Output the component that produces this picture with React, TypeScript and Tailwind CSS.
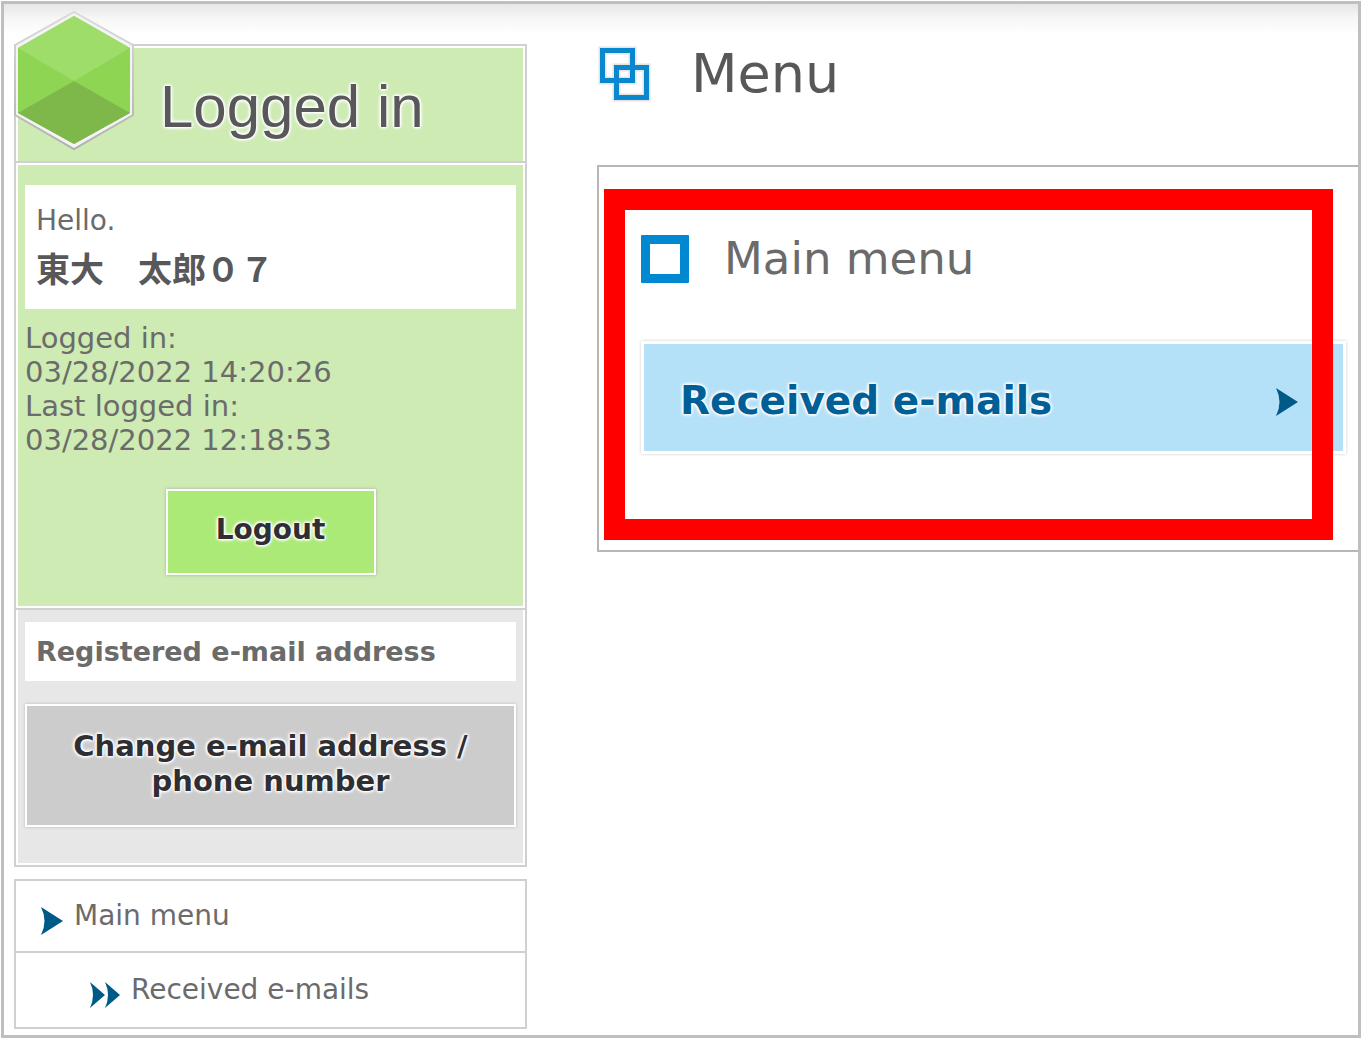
import type { ReactNode } from "react";

const glow = "[text-shadow:0_0_2px_#fff,0_0_2px_#fff,0_0_3px_#fff,0_0_3px_#fff,0_0_4px_#fff,0_0_4px_#fff]";

function Hexagon() {
  return (
    <svg viewBox="0 0 120 140" className="h-[140px] w-[120px]" aria-hidden="true">
      <defs>
        <linearGradient id="hexEdge" x1="0" y1="0" x2="0" y2="1">
          <stop offset="0" stopColor="#dadada" />
          <stop offset="1" stopColor="#b0b0b0" />
        </linearGradient>
      </defs>
      <path d="M60 1 L119 34 V104 L60 138 L1 104 V34 Z" fill="#f4f4f4" stroke="url(#hexEdge)" strokeWidth="2" />
      <path d="M60 5 L116 37 V102 L60 133 L4 102 V37 Z" fill="#8dd552" />
      <path d="M60 5 L116 37 L60 70 L4 37 Z" fill="#9fdd6b" />
      <path d="M60 70 L116 102 L60 133 L4 102 Z" fill="#7eb74a" />
    </svg>
  );
}

function SquaresIcon() {
  return (
    <svg viewBox="0 0 56 58" className="h-[58px] w-[56px]" aria-hidden="true">
      <g fill="none" strokeLinejoin="miter">
        <g stroke="#e6e2e0" strokeWidth="8">
          <rect x="5.5" y="5.5" width="30" height="30" />
          <rect x="19.5" y="22.5" width="30" height="30" />
        </g>
        <g stroke="#0a88cf" strokeWidth="5">
          <rect x="5.5" y="5.5" width="30" height="30" />
          <rect x="19.5" y="22.5" width="30" height="30" />
        </g>
      </g>
    </svg>
  );
}

function Arrow() {
  return (
    <svg viewBox="0 0 24 28" className="h-7 w-6 shrink-0" aria-hidden="true">
      <path d="M1 0 L23 14 L1 28 Q8 14 1 0 Z" fill="#005a87" />
    </svg>
  );
}

function DoubleArrow() {
  return (
    <svg viewBox="0 0 32 28" className="h-7 w-8 shrink-0" aria-hidden="true">
      <path d="M1 1 L16 14 L1 27 Q7 14 1 1 Z M16 1 L31 14 L16 27 Q22 14 16 1 Z" fill="#005a87" />
    </svg>
  );
}

function WhiteBox({ children }: { children: ReactNode }) {
  return <div className="bg-white px-[11px]">{children}</div>;
}

export default function App() {
  return (
    <div className="min-h-screen bg-white p-px font-['DejaVu_Sans','Noto_Sans_CJK_JP',sans-serif] text-[28px] text-[#6b6b6b]">
      <div className="flex min-h-[calc(100vh-2px)] items-start border-[3px] border-[#bfbfbf] bg-[linear-gradient(#e6e6e6,#f6f6f6_14px,#fff_30px)] pl-2.5">
        <aside className="w-[513px] shrink-0 pt-10">
          <div className="border-2 border-[#d0d0d2]">
            <div className="border-b-2 border-[#d0d0d2]">
              <header className="relative flex h-[115px] items-center border-x-2 border-t-2 border-white bg-[#cdebb2] pl-[142px]">
                <div className="absolute -left-1 -top-[37px]">
                  <Hexagon />
                </div>
                <h2 className={`pt-1 font-['Liberation_Sans',sans-serif] text-[60px] leading-[64px] text-[#58585a] ${glow}`}>
                  Logged in
                </h2>
              </header>
            </div>
            <div className="border-b-2 border-[#d0d0d2]">
              <section className="border-2 border-white bg-[#cdebb2] px-[7px] pb-[31px] pt-5">
                <WhiteBox>
                  <p className="pt-[18px] leading-9">Hello.</p>
                  <p className="pb-[17px] pt-[9px] text-[34px] font-bold leading-[44px] text-[#58585a]">東大　太郎０７</p>
                </WhiteBox>
                <div className="pt-3 text-[29px] leading-[34px]">
                  <p>Logged in:</p>
                  <p>03/28/2022 14:20:26</p>
                  <p>Last logged in:</p>
                  <p>03/28/2022 12:18:53</p>
                </div>
                <div className="flex justify-center pt-8">
                  <button
                    type="button"
                    className={`h-[86px] w-[210px] border-2 border-white bg-[#abea76] pb-1 font-bold text-[#2f2f33] shadow-[0_0_3px_#aaa] ${glow}`}
                  >
                    Logout
                  </button>
                </div>
              </section>
            </div>
            <section className="border-2 border-t-0 border-white bg-[#e7e7e7] px-[7px] pb-9 pt-3">
              <WhiteBox>
                <h3 className="text-[27px] font-bold leading-[59px]">Registered e-mail address</h3>
              </WhiteBox>
              <button
                type="button"
                className={`mt-[23px] h-[123px] w-full border-2 border-white bg-[#ccc] px-8 pb-1 text-[29px] font-bold leading-[35px] text-[#2f2f33] shadow-[0_0_3px_#bbb] ${glow}`}
              >
                Change e-mail address / phone number
              </button>
            </section>
          </div>
          <nav className="mt-3 divide-y-2 divide-[#d0d0d2] border-2 border-[#d0d0d2] bg-white">
            <a href="#main-menu" className="flex h-[72px] items-center gap-2.5 pl-6">
              <span className="pt-2.5">
                <Arrow />
              </span>
              Main menu
            </a>
            <a href="#received" className="flex h-[74px] items-center gap-2.5 pl-[73px]">
              <span className="pt-2.5">
                <DoubleArrow />
              </span>
              Received e-mails
            </a>
          </nav>
        </aside>

        <main className="ml-[70px] min-w-0 flex-1 pt-[38px]">
          <div className="flex h-16 items-center gap-[38px]">
            <SquaresIcon />
            <h1 className="text-[54px] leading-[60px] text-[#58585a]">Menu</h1>
          </div>
          <section className="relative mt-[59px] border-y-2 border-l-2 border-[#b6b6b6] bg-white pb-24 pl-[42px] pr-3 pt-16">
            <div className="flex items-center gap-[35px]">
              <span className="size-12 rounded-[1px] border-[9px] border-[#0288d1] bg-white" />
              <h2 className="text-[45px] leading-[56px] text-[#6b6b6b]">Main menu</h2>
            </div>
            <a
              href="#received"
              className={`mt-[54px] flex h-[113px] items-center justify-between border-[3px] border-white bg-[#b4e1f8] pl-9 pr-11 pt-2 text-[39px] font-bold text-[#005f97] shadow-[0_0_3px_#ccc] ${glow}`}
            >
              <span>Received e-mails</span>
              <Arrow />
            </a>
            <div className="pointer-events-none absolute bottom-2.5 left-[5px] right-[25px] top-[22px] border-[21px] border-[#f00]" />
          </section>
        </main>
      </div>
    </div>
  );
}
